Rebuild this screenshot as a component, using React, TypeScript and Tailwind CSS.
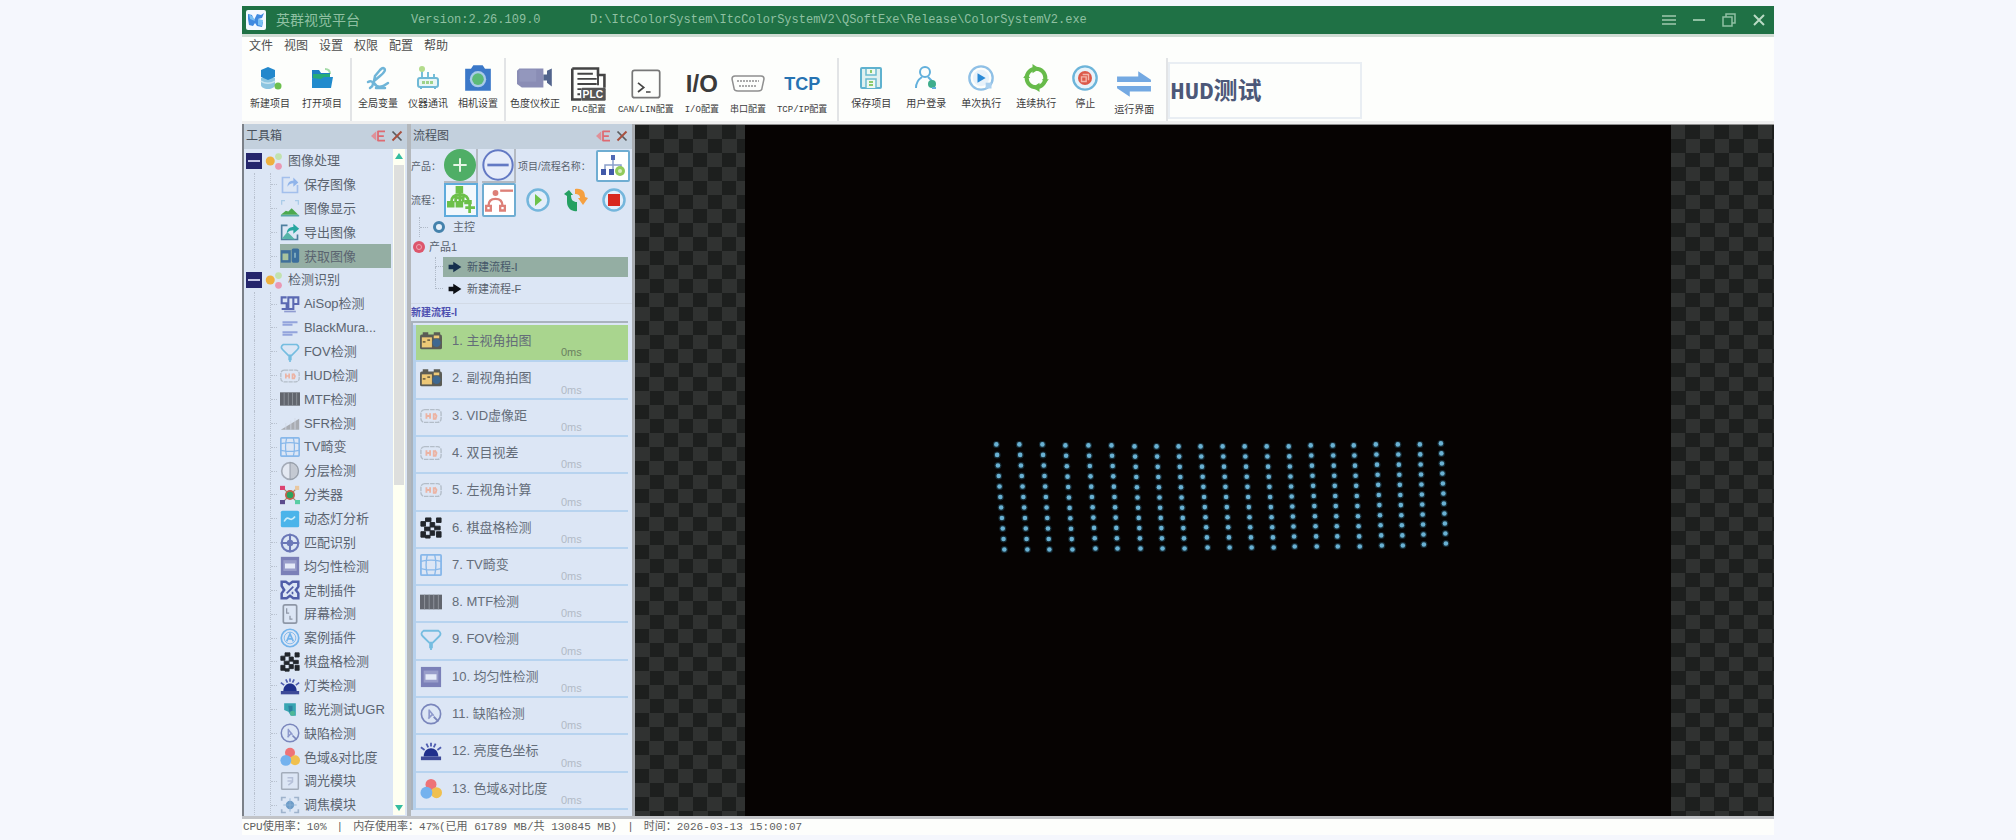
import React from 'react';

type IconProps = { name: string; className?: string };

const SHAPES: Record<string, React.ReactNode> = {
  // toolbar
  newProject: (
    <>
      <path d="M3 12v7c0 2 3 4 7 4s7-2 7-4v-7z" fill="#8cc5e0" />
      <path d="M3 15c3 3 11 3 14 0" stroke="#c8e4f0" strokeWidth="1.5" fill="none" />
      <path d="M10 1l7 3v7l-7 3-7-3V4z" fill="#2388cc" />
      <circle cx="20" cy="20" r="3.5" fill="#6cc04e" />
    </>
  ),
  openProject: (
    <>
      <path d="M15 3c4 0 5 2 5 5" stroke="#a5dba8" strokeWidth="2" fill="none" />
      <path d="M2 4h7l2 3h9v5H2z" fill="#1d7fc4" />
      <path d="M3 8h17v6H3z" fill="#27ab78" />
      <path d="M2 22V12l9 1 3-2h9l-2 11z" fill="#218bcd" />
    </>
  ),
  globalVar: (
    <g fill="none" stroke="#6fb5d8" strokeWidth="2.5" strokeLinecap="round">
      <path d="M17 2c4 1 1 5-3 8l-6 5 1-5 5-6c1-1 2-2 3-2z" />
      <path d="M2 16c3-2 5 0 5 2s-3 4-3 4M8 17c3 5 7 5 14 0M10 22h9" />
    </g>
  ),
  instrument: (
    <>
      <path d="M6 13V3M12 13V6M18 13V8" stroke="#78bfd8" strokeWidth="2" />
      <circle cx="6" cy="3" r="3" fill="#b4dc8c" />
      <rect x="2" y="12" width="20" height="9" rx="2" fill="#e9f6f4" stroke="#6fb9d6" strokeWidth="2" />
      <path d="M6 16.500h12" stroke="#9fd38a" strokeWidth="3" strokeDasharray="3 1" />
      <path d="M5 21v2M19 21v2" stroke="#6fb9d6" strokeWidth="2" />
    </>
  ),
  camera: (
    <>
      <path d="M1 4h5l2-3h8l2 3h5v19H1z" fill="#3b78c8" />
      <circle cx="12" cy="13" r="7" fill="#a8cbe8" />
      <circle cx="12" cy="13" r="5" fill="#5cba78" />
    </>
  ),
  video: (
    <>
      <path d="M2 2h20v16H4l-4-3V4z" fill="#8a8db5" />
      <path d="M2 3h14v10H2z" fill="#979bc0" opacity=".7" />
      <path d="M22 7h3V4l4-2v15l-4-3v-2h-3z" fill="#52648c" />
    </>
  ),
  plc: (
    <>
      <path d="M1 2h20v5h5v10M1 2v24h7" fill="none" stroke="#444" strokeWidth="2" />
      <path d="M5 6h12M5 10h15M5 14h15M5 18h3M5 22h2M21 3v12" stroke="#444" strokeWidth="1.500" />
      <rect x="8" y="17" width="19" height="10" rx="1" fill="#555" />
      <text x="17" y="25" fontSize="8" fontWeight="700" fill="#fff" textAnchor="middle" fontFamily="Liberation Sans">PLC</text>
    </>
  ),
  terminal: (
    <g fill="none" stroke="#777" strokeWidth="1.500">
      <rect x="2" y="2" width="24" height="24" rx="2" />
      <path d="M7 13l5 4-5 4M14 21h4" stroke="#444" />
    </g>
  ),
  serial: (
    <g fill="none" stroke="#8f8f8f" strokeWidth="1.500">
      <path d="M4 2h26c2 0 3 1 3 3l-2 9c0 2-2 3-4 3H7c-2 0-4-1-4-3L1 5c0-2 1-3 3-3z" />
      <path d="M6 7h22M8 12h18" strokeDasharray="2 1" />
    </g>
  ),
  save: (
    <>
      <rect x="2" y="2" width="20" height="20" rx="1" fill="#dff0f0" stroke="#5fb2cf" strokeWidth="2" />
      <path d="M7 3v6h10V3M7 22v-9h10v9" fill="#eef8f2" stroke="#6cbbcf" strokeWidth="1.500" />
      <path d="M12 4v3M10 16h4M10 19h4" stroke="#8ccb6c" strokeWidth="2" />
    </>
  ),
  user: (
    <>
      <circle cx="11" cy="6" r="5" fill="none" stroke="#62b0dc" strokeWidth="2" />
      <path d="M2 22c0-6 3-9 6-11M14 11l4 4" fill="none" stroke="#62b0dc" strokeWidth="2" />
      <circle cx="18" cy="18" r="4" fill="#3fae8c" />
      <path d="M18 22h4" stroke="#62b0dc" strokeWidth="2" />
    </>
  ),
  runOnce: (
    <>
      <circle cx="12" cy="12" r="10" fill="none" stroke="#8fc0e6" strokeWidth="2" />
      <circle cx="12" cy="12" r="7" fill="#e8f2fa" />
      <path d="M9 8l7 4-7 4z" fill="#2a8ad6" />
      <path d="M16 16h5v5h-5z" fill="#a9cfee" />
    </>
  ),
  loop: (
    <>
      <circle cx="12" cy="12" r="8" fill="none" stroke="#67bb4a" strokeWidth="3.500" />
      <path d="M9 0l6 4-6 4zM15 16l-6 4 6 4z" fill="#67bb4a" />
      <path d="M1 12l3-4 3 4zM17 13l3 4 3-4z" fill="#67bb4a" />
    </>
  ),
  stopTool: (
    <>
      <circle cx="12" cy="12" r="10" fill="#e8f3fa" stroke="#6db5da" strokeWidth="2" />
      <circle cx="12" cy="12" r="6" fill="#dc5a4a" />
      <path d="M10 9h5v5M9 11h4v4H9z" fill="none" stroke="#f2b5aa" strokeWidth="1.200" />
    </>
  ),
  swap: (
    <path d="M1 7h20V2l12 8v2H1zM33 16H1v2l12 8v-5h20z" fill="#74a9e2" />
  ),
  // tool tree and flow list
  saveImg: (
    <>
      <path d="M12 3H3v18h18v-9" fill="none" stroke="#a3bfec" strokeWidth="2" />
      <path d="M9 14c0-5 3-7 7-7V3l6 6-6 5v-4c-3 0-5 1-7 4z" fill="#90b4ea" />
    </>
  ),
  showImg: (
    <>
      <path d="M2 7V2h4M18 2h4v5" fill="none" stroke="#a9cbe8" strokeWidth="1.500" />
      <path d="M1 19l6-5 3 1 4-4 8 8z" fill="#4ca94e" />
      <path d="M1 20h22" stroke="#59a7a8" strokeWidth="2" />
    </>
  ),
  exportImg: (
    <>
      <path d="M9 4H2v17h19v-6" fill="none" stroke="#4e7f9f" strokeWidth="2" />
      <path d="M2 20l7-8 4 4 5 5z" fill="#56b4a8" />
      <path d="M8 13c1-6 5-7 8-7V2l7 6-7 6v-4c-3 0-5 1-8 3z" fill="#27a6a0" />
    </>
  ),
  grabImg: (
    <>
      <path d="M1 5h12v15H1z" fill="#40709a" />
      <path d="M3 9h7v8H3z" fill="#a8c39e" />
      <rect x="14" y="3" width="9" height="17" rx="2" fill="#3b6e9c" />
      <path d="M18 8v6" stroke="#89b4c4" strokeWidth="2" />
    </>
  ),
  grab: (
    <>
      <rect x="0" y="5" width="24" height="16" rx="2" fill="#5b5c55" />
      <rect x="2" y="8" width="11" height="11" fill="#edc877" />
      <path d="M3 4h6M15 4h7" stroke="#5b5c55" strokeWidth="3" />
      <path d="M15 6h6v3h-6z" fill="#edc877" />
      <circle cx="18" cy="14" r="4.500" fill="#3f6890" />
      <path d="M3 13h3M8 11h3" stroke="#7b6b45" strokeWidth="2" />
    </>
  ),
  aisop: (
    <>
      <path d="M8 4H2v7h6v7H2M10 4h6v14h-6zM16 4h6v8h-6" fill="none" stroke="#5b69b2" strokeWidth="2.500" />
      <path d="M5 21h14" stroke="#8f9bd0" strokeWidth="2" />
    </>
  ),
  mura: (
    <path d="M3 5h18M3 8h12M3 17h18M3 20h12" stroke="#93a4dc" strokeWidth="2.500" />
  ),
  funnel: (
    <path d="M4 3h16c3 2 3 4 1 6l-7 7h-4L3 9C1 7 1 5 4 3zM12 16v8M11 16v6M13 16v6" fill="none" stroke="#75bde0" strokeWidth="2" />
  ),
  hud: (
    <>
      <rect x="1" y="5" width="22" height="14" rx="4" fill="none" stroke="#b3bdc8" strokeWidth="1.500" strokeDasharray="5 1" />
      <path d="M7 9v6M11 9v6M7 12h4M15 9v6h2l1-3-2-3" fill="none" stroke="#ecb3a3" strokeWidth="2" />
    </>
  ),
  bars: (
    <>
      <rect x="0" y="4" width="24" height="16" fill="#62666e" />
      <path d="M5 4v16M10 4v16M15 4v16M20 4v16" stroke="#92969e" strokeWidth="1" />
    </>
  ),
  slope: (
    <>
      <path d="M1 20L23 7v13z" fill="#a9acb2" />
      <path d="M7 12v8M13 9v11M18 6v14" stroke="#d3dae6" />
    </>
  ),
  grid: (
    <g fill="none" stroke="#88b8ea" strokeWidth="2">
      <rect x="1" y="1" width="22" height="22" rx="1" />
      <path d="M8 1c-2 8-2 14 0 22M16 1c2 8 2 14 0 22M1 8c8-2 14-2 22 0M1 16c8 2 14 2 22 0" strokeWidth="1.500" />
    </g>
  ),
  layer: (
    <>
      <circle cx="12" cy="12" r="10" fill="#e4e9f2" stroke="#a5acb8" strokeWidth="2" />
      <path d="M12 2a10 10 0 0 1 0 20z" fill="#c4c9d2" stroke="#8c949f" />
    </>
  ),
  classify: (
    <>
      <path d="M4 4l16 16M20 4L4 20" stroke="#9c8f6e" strokeWidth="1.500" />
      <circle cx="12" cy="12" r="5" fill="#2aa35f" stroke="#c4604c" strokeWidth="2" />
      <rect x="0" y="1" width="6" height="5" fill="#dc4472" />
      <rect x="18" y="1" width="5" height="5" fill="#e9c7a0" />
      <rect x="0" y="18" width="6" height="5" fill="#5b4b8c" />
      <rect x="18" y="18" width="6" height="5" fill="#58cda4" />
    </>
  ),
  lamp: (
    <>
      <rect x="1" y="2" width="22" height="20" rx="2" fill="#4bb4ea" />
      <path d="M5 15c3-6 5-4 7-3s4 0 6-3" fill="none" stroke="#c9ecfa" strokeWidth="2" />
    </>
  ),
  match: (
    <>
      <circle cx="12" cy="12" r="10" fill="none" stroke="#6b78b8" strokeWidth="2.500" />
      <path d="M12 1v22M1 12h22" stroke="#6b78b8" strokeWidth="2.500" />
      <circle cx="12" cy="12" r="4" fill="#6b78b8" />
    </>
  ),
  uniform: (
    <>
      <rect x="1" y="1" width="22" height="22" fill="#7b80b8" />
      <rect x="4" y="5" width="16" height="13" fill="#989dca" />
      <rect x="6" y="9" width="12" height="6" fill="#e4eaf8" />
    </>
  ),
  plugin: (
    <g fill="none" stroke="#4f5da8" strokeWidth="3">
      <path d="M2 7V2h5l4 3 4-3h7v6l-3 4 3 4v6h-6l-4-3-4 3H2v-6l3-4z" />
      <path d="M8 16l8-8M15 14v3" strokeWidth="2" />
    </g>
  ),
  screen: (
    <g fill="none" stroke="#8e97a6" strokeWidth="2">
      <rect x="4" y="1" width="16" height="22" rx="2" />
      <path d="M8 5v6h3M15 18h-3v-4" strokeWidth="1.500" />
    </g>
  ),
  caseA: (
    <g fill="none" stroke="#73b3ea" strokeWidth="2">
      <circle cx="12" cy="12" r="10.500" />
      <circle cx="12" cy="12" r="7" strokeWidth="1" />
      <path d="M8 16l4-9 4 9M9 13h6" />
    </g>
  ),
  checker: (
    <path
      d="M1 5h5v5H1zM6 1h6v4H6zM18 1h5v5h-5zM11 6h5v5h-5zM5 11h6v4H5zM16 10h6v4h-6zM1 16h5v6H1zM11 15h5v5h-5zM6 20h5v3H6zM18 16h5v6h-5z"
      fill="#22262c" stroke="#22262c"
    />
  ),
  siren: (
    <>
      <path d="M4 18c0-12 16-12 16 0z" fill="#20308c" />
      <path d="M1 20h22" stroke="#3e4a98" strokeWidth="4" />
      <path d="M1 8l4 3M7 4l2 4M17 4l-2 4M23 8l-4 3M12 3v4" stroke="#4f5db0" strokeWidth="2" />
    </>
  ),
  ugr: (
    <>
      <path d="M5 4h14v15h-6l-3-5-5-2z" fill="#38a5b2" />
      <path d="M10 7h5v7h-4z" fill="#2c7f9e" />
      <circle cx="15" cy="16" r="3" fill="#4fb797" />
    </>
  ),
  defect: (
    <>
      <circle cx="12" cy="12" r="10.500" fill="none" stroke="#7a86bc" strokeWidth="1.800" />
      <path d="M10 17V7M10 8l5 6M9 17l4-4" fill="none" stroke="#8f9acc" strokeWidth="1.800" />
      <path d="M15 15l5 5" stroke="#7a86bc" strokeWidth="2" />
    </>
  ),
  gamut: (
    <>
      <circle cx="12" cy="7" r="6" fill="#ee7377" />
      <circle cx="18" cy="16" r="6" fill="#f0c04e" />
      <circle cx="7" cy="16" r="6.500" fill="#74b2ee" />
    </>
  ),
  dim: (
    <g fill="none" stroke="#a3adbb" strokeWidth="1.800">
      <rect x="2" y="2" width="20" height="20" rx="1" />
      <path d="M9 8h6v5l-5 4M9 12h5" stroke="#b5c0d8" />
    </g>
  ),
  focus: (
    <>
      <path d="M2 7V3h5M17 3h5v4M2 17v4h5M17 21h5v-4" fill="none" stroke="#9fb3cc" strokeWidth="2" />
      <circle cx="12" cy="12" r="5" fill="#6d9cc8" />
      <path d="M12 4v16M4 12h16" stroke="#8db0d2" strokeWidth="1" />
    </>
  ),
  // flow controls
  plus: (
    <>
      <circle cx="12" cy="12" r="12" fill="#4fae66" />
      <path d="M12 7v10M7 12h10" stroke="#e6f5e6" strokeWidth="1.500" />
    </>
  ),
  minus: (
    <>
      <circle cx="12" cy="12" r="11" fill="#e6ecfa" stroke="#6379c4" strokeWidth="1.500" />
      <path d="M4 12h16" stroke="#6379c4" strokeWidth="2" />
    </>
  ),
  treeName: (
    <>
      <rect x="10" y="1" width="4" height="5" fill="#5269b4" />
      <path d="M12 6v9M4 15v-4h16v4" fill="none" stroke="#8aa0cc" strokeWidth="1.500" />
      <rect x="0" y="15" width="5" height="6" fill="#4159a8" />
      <rect x="8" y="15" width="5" height="6" fill="#4159a8" />
      <circle cx="19" cy="17" r="5" fill="#92cb5c" />
      <circle cx="19" cy="17" r="2" fill="#d7edbf" />
    </>
  ),
  treeAdd: (
    <>
      <rect x="8" y="0" width="7" height="7" fill="#6cc04a" />
      <path d="M12 6v9M4 15c0-5 3-7 8-7s8 2 8 7M8 15v-4h7v4" fill="none" stroke="#6cc04a" strokeWidth="2.500" />
      <path d="M0 14h7v6H0zM8 14h7v6H8zM16 13h7v4h-7z" fill="#6cc04a" />
      <path d="M21 16v9M17 20h9" stroke="#6cc04a" strokeWidth="2.500" />
    </>
  ),
  treeDel: (
    <g fill="none" stroke="#dd8078" strokeWidth="2">
      <path d="M13 4h11" />
      <circle cx="9" cy="6" r="2.500" fill="#dd8078" stroke="none" />
      <path d="M3 17c0-4 2-6 6-6s6 2 6 6M1 17h4v4H1zM13 17h4v4h-4z" />
    </g>
  ),
  play: (
    <>
      <circle cx="12" cy="12" r="10.500" fill="#e3eefa" stroke="#74b6dc" strokeWidth="2.500" />
      <path d="M9 6l7 6-7 6z" fill="#6cc24a" />
    </>
  ),
  recycle: (
    <>
      <path d="M0 6l5-4 4 5H7c0 5 2 7 6 7v9c-4 1-10-2-10-9V8z" fill="#25a062" />
      <path d="M11 1c8-1 10 3 10 8l3 1-5 7-5-7h2c0-3-2-4-5-4z" fill="#f5a040" />
    </>
  ),
  stop: (
    <>
      <circle cx="12" cy="12" r="10.500" fill="#e3eefa" stroke="#74b6dc" strokeWidth="2.500" />
      <rect x="6" y="6" width="12" height="12" fill="#d8281e" />
    </>
  ),
  arrow: (
    <path d="M1 8h8V3l14 9-14 9v-5H1z" fill="currentColor" />
  ),
  group: (
    <>
      <circle cx="7" cy="12" r="6" fill="#eeb03e" />
      <circle cx="18" cy="6" r="4.500" fill="#c2e2ae" />
      <circle cx="18" cy="19" r="4.500" fill="#ea98b4" />
    </>
  ),
  pin: (
    <>
      <path d="M0 12l9-8v16z" fill="#e09098" />
      <path d="M12 3v18M12 4h12M12 12h10M12 20h12" stroke="#de6a72" strokeWidth="3" fill="none" />
    </>
  ),
  close: (
    <>
      <path d="M3 3l18 18" stroke="#5a5c60" strokeWidth="3.500" />
      <path d="M21 3L3 21" stroke="#a8503e" strokeWidth="4" />
    </>
  ),
};

const VIEW_BOXES: Record<string, string> = {
  video: '0 0 30 20',
  plc: '0 0 28 28',
  terminal: '0 0 28 28',
  serial: '0 0 34 20',
  swap: '0 0 34 28',
  treeAdd: '0 0 26 26',
};

function Icon({ name, className }: IconProps) {
  return (
    <svg viewBox={VIEW_BOXES[name] || '0 0 24 24'} className={`shrink-0 ${className || ''}`} aria-hidden="true">
      {SHAPES[name]}
    </svg>
  );
}

type Tool = { label: string; icon?: string; glyph?: string; size?: string; low?: boolean; small?: boolean };

const TOOL_GROUPS: { className: string; tools: Tool[] }[] = [
  {
    className: 'gap-3 px-2',
    tools: [
      { label: '新建项目', icon: 'newProject', size: 'w-6 h-6' },
      { label: '打开项目', icon: 'openProject', size: 'w-6 h-6' },
    ],
  },
  {
    className: 'gap-2.5 px-1.5',
    tools: [
      { label: '全局变量', icon: 'globalVar', size: 'w-6 h-6' },
      { label: '仪器通讯', icon: 'instrument', size: 'w-6 h-6' },
      { label: '相机设置', icon: 'camera', size: 'w-8 h-7' },
    ],
  },
  {
    className: 'gap-[11px] pl-1 pr-2.5',
    tools: [
      { label: '色度仪校正', icon: 'video', size: 'w-10 h-6' },
      { label: 'PLC配置', icon: 'plc', size: 'w-9 h-9', low: true, small: true },
      { label: 'CAN/LIN配置', icon: 'terminal', size: 'w-8 h-8', low: true, small: true },
      { label: 'I/O配置', glyph: 'I/O', low: true, small: true },
      { label: '串口配置', icon: 'serial', size: 'w-9 h-5', low: true, small: true },
      { label: 'TCP/IP配置', glyph: 'TCP', low: true, small: true },
    ],
  },
  {
    className: 'gap-[15px] px-3',
    tools: [
      { label: '保存项目', icon: 'save', size: 'w-6 h-6' },
      { label: '用户登录', icon: 'user', size: 'w-6 h-6' },
      { label: '单次执行', icon: 'runOnce', size: 'w-7 h-7' },
      { label: '连续执行', icon: 'loop', size: 'w-7 h-7' },
      { label: '停止', icon: 'stopTool', size: 'w-7 h-7' },
      { label: '运行界面', icon: 'swap', size: 'w-9 h-8', low: true },
    ],
  },
];

const MENUS = ['文件', '视图', '设置', '权限', '配置', '帮助'];

const TOOLBOX = [
  {
    title: '图像处理',
    items: [
      ['saveImg', '保存图像'],
      ['showImg', '图像显示'],
      ['exportImg', '导出图像'],
      ['grabImg', '获取图像'],
    ],
  },
  {
    title: '检测识别',
    items: [
      ['aisop', 'AiSop检测'],
      ['mura', 'BlackMura...'],
      ['funnel', 'FOV检测'],
      ['hud', 'HUD检测'],
      ['bars', 'MTF检测'],
      ['slope', 'SFR检测'],
      ['grid', 'TV畸变'],
      ['layer', '分层检测'],
      ['classify', '分类器'],
      ['lamp', '动态灯分析'],
      ['match', '匹配识别'],
      ['uniform', '均匀性检测'],
      ['plugin', '定制插件'],
      ['screen', '屏幕检测'],
      ['caseA', '案例插件'],
      ['checker', '棋盘格检测'],
      ['siren', '灯类检测'],
      ['ugr', '眩光测试UGR'],
      ['defect', '缺陷检测'],
      ['gamut', '色域&对比度'],
      ['dim', '调光模块'],
      ['focus', '调焦模块'],
    ],
  },
];

const FLOW_STEPS = [
  ['grab', '主视角拍图'],
  ['grab', '副视角拍图'],
  ['hud', 'VID虚像距'],
  ['hud', '双目视差'],
  ['hud', '左视角计算'],
  ['checker', '棋盘格检测'],
  ['grid', 'TV畸变'],
  ['bars', 'MTF检测'],
  ['funnel', 'FOV检测'],
  ['uniform', '均匀性检测'],
  ['defect', '缺陷检测'],
  ['siren', '亮度色坐标'],
  ['gamut', '色域&对比度'],
];

// Dot columns of the test pattern: [top x, top y, bottom x, bottom y]
const DOT_COLUMNS = [
  [251, 319, 259, 424], [274, 319, 282, 424], [297, 319, 304, 424], [320, 320, 327, 424],
  [343, 320, 350, 423], [366, 320, 372, 423], [389, 321, 395, 423], [411, 321, 417, 423],
  [433, 321, 439, 423], [455, 321, 462, 422], [477, 321, 484, 422], [499, 321, 506, 422],
  [521, 321, 528, 422], [543, 321, 549, 421], [565, 320, 571, 421], [587, 320, 592, 421],
  [608, 320, 614, 421], [630, 319, 636, 420], [652, 319, 657, 420], [674, 319, 678, 419],
  [695, 318, 700, 418],
];
const DOT_ROWS = 11;

function TitleBar() {
  return (
    <header className="flex items-center h-7 bg-[#1f7145] text-[#8fc0a2] pl-1 pr-2">
      <svg viewBox="0 0 20 20" className="w-5 h-5 shrink-0">
        <rect width="20" height="20" rx="2" fill="#f4f9ff" />
        <path d="M2 4l4 1 2 5 3-6 4 1 3-2-2 5-4 1 5 3-1 5-5-1-2-3-2 3-4-1-1-6z" fill="#3f8ae0" />
        <path d="M3 4l4 3 2 4-5-2zM12 9l5 1-1 6-4-1z" fill="#78bff2" />
      </svg>
      <h1 className="ml-2.5 w-[135px] text-sm">英群视觉平台</h1>
      <span className="w-[179px] font-[Liberation_Mono,monospace] text-xs">Version:2.26.109.0</span>
      <span className="flex-1 font-[Liberation_Mono,monospace] text-xs whitespace-nowrap">
        D:\ItcColorSystem\ItcColorSystemV2\QSoftExe\Release\ColorSystemV2.exe
      </span>
      <div className="flex items-center gap-4">
        <button aria-label="菜单" className="w-3.5 h-3.5">
          <svg viewBox="0 0 14 14"><path d="M0 3h14M0 7h14M0 11h14" stroke="#7fb293" strokeWidth="2" /></svg>
        </button>
        <button aria-label="最小化" className="w-3.5 h-3.5">
          <svg viewBox="0 0 14 14"><path d="M1 7h12" stroke="#8fc0a2" strokeWidth="2" /></svg>
        </button>
        <button aria-label="还原" className="w-3.5 h-3.5">
          <svg viewBox="0 0 14 14">
            <path d="M4 4V1h9v9h-3M1 4h9v9H1z" fill="none" stroke="#8fc0a2" strokeWidth="1.500" />
          </svg>
        </button>
        <button aria-label="关闭" className="w-3.5 h-3.5">
          <svg viewBox="0 0 14 14"><path d="M2 2l10 10M12 2L2 12" stroke="#b9dac4" strokeWidth="2" /></svg>
        </button>
      </div>
    </header>
  );
}

function ToolButton({ tool }: { tool: Tool }) {
  return (
    <button className={`flex flex-col items-center text-[#3c3c3c] ${tool.low ? 'pt-1.5' : ''}`}>
      <span className="flex items-center justify-center h-10">
        {tool.icon && <Icon name={tool.icon} className={tool.size} />}
        {tool.glyph === 'I/O' && <span className="text-2xl leading-7 font-bold text-[#3a3a3a]">I/O</span>}
        {tool.glyph === 'TCP' && <span className="text-lg leading-7 font-bold text-[#2673b2]">TCP</span>}
      </span>
      <span className={`leading-3 whitespace-nowrap ${tool.small ? 'text-[9px] font-[Liberation_Mono,Noto_Sans_CJK_SC,monospace]' : 'text-[10px]'}`}>
        {tool.label}
      </span>
    </button>
  );
}

function Toolbar() {
  return (
    <div className="flex h-[66px] border-b-3 border-[#efefef]">
      {TOOL_GROUPS.map((group, i) => (
        <div key={i} className={`flex items-start border-r-2 border-[#e2e4e6] ${group.className}`}>
          {group.tools.map(tool => <ToolButton key={tool.label} tool={tool} />)}
        </div>
      ))}
      <input
        aria-label="方案名称"
        defaultValue="HUD测试"
        className="w-[194px] h-[57px] mt-1 pb-1 border-2 border-[#e9eef3] bg-[#fdfefc] text-2xl text-[#4c5878] font-[Liberation_Mono,Noto_Sans_CJK_SC,monospace] font-bold"
      />
    </div>
  );
}

function PanelHeader({ title }: { title: string }) {
  return (
    <div className="flex items-center h-[25px] pb-0.5 bg-[#c3d0dd] pl-0.5 pr-1 text-xs text-[#4a525c]">
      <h2 className="flex-1">{title}</h2>
      <button aria-label="固定" className="mr-1.5"><Icon name="pin" className="w-3.5 h-3.5" /></button>
      <button aria-label="关闭"><Icon name="close" className="w-3 h-3" /></button>
    </div>
  );
}

function Toolbox() {
  return (
    <section className="w-[169px] shrink-0 flex flex-col border-l-2 border-r-4 border-l-[#7b8088] border-r-[#b4b8bc] bg-[#dce6f5]">
      <PanelHeader title="工具箱" />
      <div className="flex h-[666px] overflow-hidden">
        <ul className="flex-1 grid auto-rows-fr h-[668px] text-[13px] text-[#5b6470]">
          {TOOLBOX.map(group => (
            <React.Fragment key={group.title}>
              <li className="flex items-center pl-0.5">
                <button aria-label="折叠" className="flex items-center justify-center w-4 h-4 bg-[#25266c]">
                  <span className="w-3 h-0.5 bg-[#c4c6e4]" />
                </button>
                <Icon name="group" className="w-5 h-[18px] ml-0.5" />
                <span className="ml-1">{group.title}</span>
              </li>
              {group.items.map(([icon, label]) => (
                <li key={label} className="flex pl-2.5 pr-0.5">
                  <span className="w-4 border-l border-dotted border-[#b9c2d0]" />
                  <span className="w-2.5 border-l border-dotted border-[#b9c2d0] flex items-center">
                    <span className="w-1.5 border-t border-dotted border-[#b9c2d0]" />
                  </span>
                  <span className={`flex flex-1 items-center whitespace-nowrap ${icon === 'grabImg' ? 'bg-[#94aea3]' : ''}`}>
                    <Icon name={icon} className="w-5 h-5" />
                    <span className="ml-1">{label}</span>
                  </span>
                </li>
              ))}
            </React.Fragment>
          ))}
        </ul>
        <div className="w-3 mr-0.5 flex flex-col items-center bg-[#fefff1]">
          <svg viewBox="0 0 12 16" className="w-3 h-4"><path d="M6 4l4 6H2z" fill="#34bda0" /></svg>
          <div className="w-2.5 h-80 bg-[#dedfdd]" />
          <svg viewBox="0 0 12 16" className="w-3 h-4 mt-auto"><path d="M6 12l4-6H2z" fill="#34bda0" /></svg>
        </div>
      </div>
    </section>
  );
}

function FlowPanel() {
  return (
    <section className="w-56 shrink-0 flex flex-col border-r-3 border-[#a9adb2] bg-[#dce6f5] text-[11px] text-[#59626e]">
      <PanelHeader title="流程图" />
      <div className="flex items-center h-[34px] pr-0.5 text-[10px]">
        <span className="w-[33px]">产品：</span>
        <button aria-label="添加产品" className="border-r-2 border-b-2 border-[#b4bac2]"><Icon name="plus" className="w-8 h-8" /></button>
        <button aria-label="删除产品" className="ml-1 border-r-2 border-b-2 border-[#b4bac2]"><Icon name="minus" className="w-8 h-8" /></button>
        <span className="ml-0.5 flex-1 whitespace-nowrap">项目/流程名称：</span>
        <button aria-label="名称" className="flex items-center justify-center w-[34px] h-8 border-2 border-[#6fadd2] bg-white rounded-xs">
          <Icon name="treeName" className="w-6 h-6" />
        </button>
      </div>
      <div className="flex items-center h-[34px] pr-1.5 text-[10px]">
        <span className="w-[33px]">流程：</span>
        <button aria-label="添加流程" className="flex items-center justify-center w-[34px] h-[34px] border-2 border-[#5fabdc] bg-[#f2f8fd]">
          <Icon name="treeAdd" className="w-7 h-7" />
        </button>
        <button aria-label="删除流程" className="flex items-center justify-center ml-1 w-[34px] h-[34px] border-2 border-[#6fadd2] bg-white rounded-xs">
          <Icon name="treeDel" className="w-7 h-7" />
        </button>
        <div className="flex flex-1 items-center justify-between pl-2.5">
          <button aria-label="运行"><Icon name="play" className="w-6 h-6" /></button>
          <button aria-label="循环"><Icon name="recycle" className="w-6 h-6" /></button>
          <button aria-label="停止"><Icon name="stop" className="w-6 h-6" /></button>
        </div>
      </div>
      <ul className="flex flex-col h-[87px] border-b border-[#d2dae6] mb-px">
        <li className="flex items-center h-5 pl-2">
          <span className="flex items-center h-5 w-2.5 mr-1 border-l border-dotted border-[#b0bac8]">
            <span className="w-2 border-t border-dotted border-[#b0bac8]" />
          </span>
          <span className="w-3 h-3 border-3 border-[#4482ac] bg-[#e6f0fa] rounded-full" />
          <span className="ml-2">主控</span>
        </li>
        <li className="flex items-center h-5 pl-0.5">
          <span className="flex items-center justify-center w-3 h-3 rounded-full bg-[#dd566c]">
            <span className="w-1.5 h-1.5 rounded-full border border-[#f0a6b0]" />
          </span>
          <span className="ml-1">产品1</span>
        </li>
        {['新建流程-I', '新建流程-F'].map((name, i) => (
          <li key={name} className="flex h-[22px] pl-6 pr-1">
            <span className="w-2 flex flex-col">
              <span className="h-2.5 border-l border-b border-dotted border-[#b0bac8]" />
              {i === 0 && <span className="flex-1 border-l border-dotted border-[#b0bac8]" />}
            </span>
            <span className={`flex flex-1 items-center pl-1 h-5 ${i === 0 ? 'bg-[#94aea3] text-[#46586a]' : ''}`}>
              <Icon name="arrow" className={`w-4 h-3.5 ${i === 0 ? 'text-[#16304e]' : 'text-[#0c0f14]'}`} />
              <span className="ml-1">{name}</span>
            </span>
          </li>
        ))}
      </ul>
      <p className="h-[15px] mb-px leading-4 font-bold text-[10px] text-[#4c4fb0]">新建流程-I</p>
      <div className="mr-1 border-t-2 border-l-2 border-[#a9b3bd] pt-0.5">
        <ol className="grid auto-rows-fr h-[485px] border-l-3 border-[#b5d0ec] text-[13px] text-[#646d79]">
          {FLOW_STEPS.map(([icon, label], i) => (
            <li key={label} className={`flex border-b-2 border-[#b7d3ef] ${i === 0 ? 'bg-[#a9d58e]' : ''}`}>
              <Icon name={icon} className="w-[22px] h-6 mt-1 ml-1" />
              <span className="ml-2.5 mt-1.5 w-[109px] leading-5 whitespace-nowrap">{i + 1}. {label}</span>
              <span className={`self-end text-[11px] leading-[15px] ${i === 0 ? 'text-[#6b8060]' : 'text-[#b2bac6]'}`}>0ms</span>
            </li>
          ))}
        </ol>
      </div>
    </section>
  );
}

function Viewer() {
  return (
    <section className="flex-1 flex bg-black border-t border-[#8f8f8f]">
      <div className="w-[110px] bg-[repeating-conic-gradient(#303231_0_25%,#1d1f1e_0_50%)] bg-[length:29px_28px]" />
      <div className="flex-1 bg-[#060302]">
        <svg viewBox="0 0 925 690" className="w-full h-full" preserveAspectRatio="xMidYMid meet">
          {DOT_COLUMNS.map(([x1, y1, x2, y2], c) =>
            Array.from({ length: DOT_ROWS }, (_, r) => {
              const t = r / (DOT_ROWS - 1);
              const cx = x1 + (x2 - x1) * t;
              const cy = y1 + (y2 - y1) * t;
              return (
                <g key={`${c}-${r}`}>
                  <circle cx={cx} cy={cy} r="3.500" fill="#1f4658" opacity=".6" />
                  <circle cx={cx} cy={cy} r="2.300" fill="#69b1d3" />
                </g>
              );
            })
          )}
        </svg>
      </div>
      <div className="w-[103px] bg-[repeating-conic-gradient(#1d1f1e_0_25%,#303231_0_50%)] bg-[length:29px_28px]" />
    </section>
  );
}

export default function App() {
  return (
    <div className="min-h-screen bg-[#f5f7fd] pt-1.5 px-[12%] font-[Liberation_Sans,Noto_Sans_CJK_SC,sans-serif]">
      <TitleBar />
      <nav className="flex items-center gap-[11px] h-5 pl-[7px] border-t-3 border-[#d0dcd4] bg-[#fdfefc] text-xs text-[#4e4e4e]">
        {MENUS.map(menu => <button key={menu}>{menu}</button>)}
      </nav>
      <div className="bg-[#fdfefc] pt-1">
        <Toolbar />
      </div>
      <main className="flex">
        <Toolbox />
        <FlowPanel />
        <Viewer />
      </main>
      <footer className="flex items-center gap-2.5 h-[19px] pl-px border-t-3 border-[#c2c4c8] bg-[#fdfefc] font-[Liberation_Mono,Noto_Sans_CJK_SC,monospace] text-[11px] leading-4 text-[#606060] whitespace-nowrap">
        <span>CPU使用率：10%</span>
        <span>|</span>
        <span>内存使用率：47%(已用 61789 MB/共 130845 MB)</span>
        <span>|</span>
        <span>时间：2026-03-13 15:00:07</span>
      </footer>
    </div>
  );
}
